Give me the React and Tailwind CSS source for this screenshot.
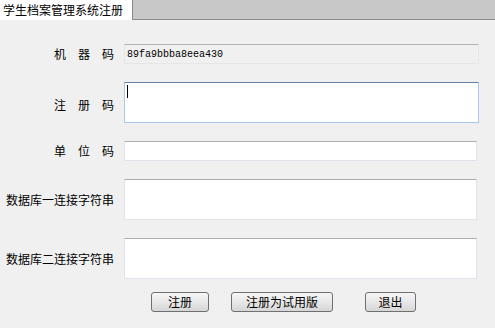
export default function App() {
    const font = { fontFamily: '"Noto Sans CJK SC", "Noto Sans", sans-serif' };

    const labelCls = 'w-[124px] pr-[10px] flex justify-end items-center text-[12px] leading-none text-black';
    const fieldCls = 'bg-white border border-[#e2e3ea] border-t-[#abadb3]';

    return (
        <div className="w-[495px] h-[328px] bg-[#f0f0f0] flex flex-col" style={font}>
            {/* tab header */}
            <div className="h-[20px] flex shrink-0">
                <div className="w-[132px] bg-white flex items-center pl-[3px] text-[12px] leading-none text-black">
                    学生档案管理系统注册
                </div>
                <div className="flex-1 bg-[#c8c8c8] border-l border-b border-[#8c8c8c]" />
            </div>

            <div className="flex flex-col pt-[24px]">
                {/* machine code */}
                <div className="flex h-[20px]">
                    <div className={labelCls}>
                        <span className="flex gap-[12px]"><span>机</span><span>器</span><span>码</span></span>
                    </div>
                    <div className="w-[355px] bg-[#f0f0f0] border border-[#e6e6e6] border-t-[#b4b4b4] flex items-center pl-[2px] text-[10px] text-black" style={{ fontFamily: '"Liberation Mono", monospace' }}>
                        89fa9bbba8eea430
                    </div>
                </div>

                {/* register code */}
                <div className="flex h-[41px] mt-[18px]">
                    <div className={labelCls + ' pt-[5px]'}>
                        <span className="flex gap-[12px]"><span>注</span><span>册</span><span>码</span></span>
                    </div>
                    <div className="w-[355px] bg-white border border-[#a9c9e8] border-t-[#5e83a6] relative">
                        <div className="absolute left-[2px] top-[2px] w-px h-[13px] bg-black" />
                    </div>
                </div>

                {/* unit code */}
                <div className="flex h-[20px] mt-[18px]">
                    <div className={labelCls}>
                        <span className="flex gap-[12px]"><span>单</span><span>位</span><span>码</span></span>
                    </div>
                    <div className={'w-[353px] ' + fieldCls} />
                </div>

                {/* db1 */}
                <div className="flex h-[41px] mt-[18px]">
                    <div className={labelCls}>数据库一连接字符串</div>
                    <div className={'w-[353px] ' + fieldCls} />
                </div>

                {/* db2 */}
                <div className="flex h-[41px] mt-[18px]">
                    <div className={labelCls}>数据库二连接字符串</div>
                    <div className={'w-[353px] ' + fieldCls} />
                </div>

                {/* buttons */}
                <div className="flex h-[20px] mt-[13px] pl-[151px]">
                    <button className="w-[58px] h-[20px] rounded-[3px] border border-[#707070] bg-gradient-to-b from-[#f6f6f6] via-[#e8e8e8] to-[#d6d6d6] text-[12px] leading-none text-black">
                        注册
                    </button>
                    <button className="ml-[22px] w-[102px] h-[20px] rounded-[3px] border border-[#707070] bg-gradient-to-b from-[#f6f6f6] via-[#e8e8e8] to-[#d6d6d6] text-[12px] leading-none text-black">
                        注册为试用版
                    </button>
                    <button className="ml-[32px] w-[51px] h-[20px] rounded-[3px] border border-[#707070] bg-gradient-to-b from-[#f6f6f6] via-[#e8e8e8] to-[#d6d6d6] text-[12px] leading-none text-black">
                        退出
                    </button>
                </div>
            </div>
        </div>
    );
}
